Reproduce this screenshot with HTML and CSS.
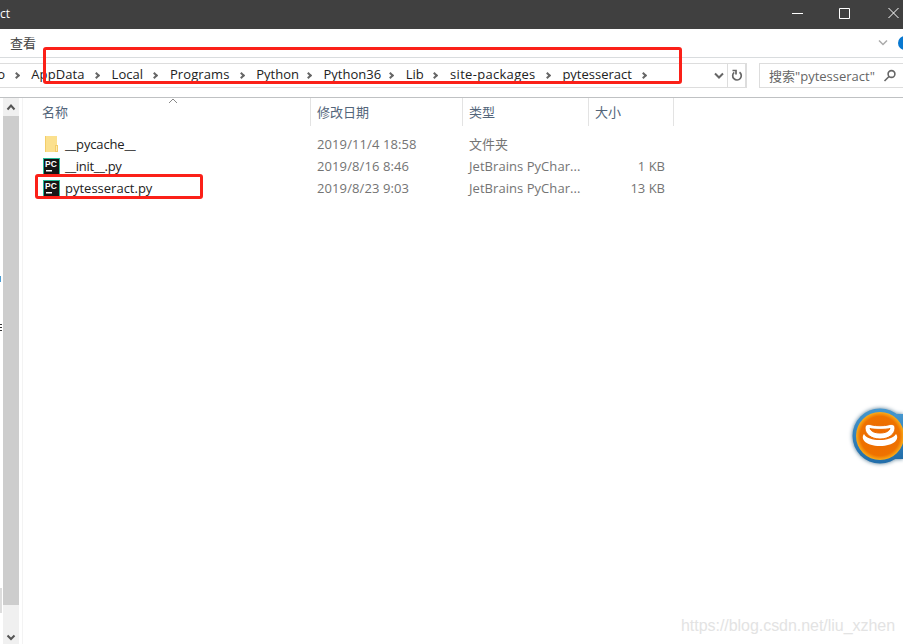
FILE: index.html
```html
<!DOCTYPE html>
<html lang="zh-CN">
<head>
<meta charset="UTF-8">
<title>pytesseract</title>
<link rel="stylesheet" href="styles.css">
</head>
<body>
<div class="window">
<header class="titlebar">
<span class="title">ct</span>
<svg class="controls" width="112" height="29" viewBox="0 0 112 29">
<path d="M1 13.500h11M48.500 8.500h10v10h-10zM97.500 8l10 10M107.500 8l-10 10"/>
</svg>
</header>

<nav class="tabs">
<span class="tab">查看</span>
<svg class="expand" width="10" height="8" viewBox="0 0 10 8"><path d="M1 1.500l4 4 4-4"/></svg>
<svg class="help" width="5" height="14" viewBox="0 0 5 14"><circle cx="7" cy="7" r="7"/></svg>
</nav>

<!-- Address bar -->
<div class="toolbar">
<div class="address">
<span class="cut">o</span><i class="sep"></i>
<span class="app">AppData</span><i class="sep"></i>
<span class="local">Local</span><i class="sep"></i>
<span class="programs">Programs</span><i class="sep"></i>
<span class="python">Python</span><i class="sep"></i>
<span class="python36">Python36</span><i class="sep"></i>
<span class="lib">Lib</span><i class="sep"></i>
<span class="site">site-packages</span><i class="sep"></i>
<span class="tess">pytesseract</span><i class="sep"></i>
<svg class="drop" width="10" height="8" viewBox="0 0 10 8"><path d="M1 1.500l4 4 4-4"/></svg>
<div class="refresh">
<svg width="12" height="13" viewBox="0 0 12 13"><path d="M8.500 3.200a4.300 4.300 0 1 1-5.300.2M1.500 1.500h3.500v4"/></svg>
</div>
</div>
<div class="search">
<span>搜索"pytesseract"</span>
<svg width="14" height="14" viewBox="0 0 14 14"><circle cx="8.500" cy="5" r="3.400"/><path d="M6 7.500L1.500 12"/></svg>
</div>
</div>

<main>
<div class="edge"><span class="dot"></span><span class="lines"></span><span class="block"></span></div>
<div class="scrollbar">
<svg width="16" height="18" viewBox="0 0 16 18"><path d="M4.500 11.500L8 7.500l3.500 4"/></svg>
<div class="thumb"></div>
<svg width="16" height="18" viewBox="0 0 16 18"><path d="M4.500 9.500L8 13l3.500-3.500"/></svg>
</div>
<div class="files">
<div class="row head">
<span class="name">名称<svg class="sort" width="10" height="6" viewBox="0 0 10 6"><path d="M1 5l4-4 4 4"/></svg></span>
<span>修改日期</span>
<span>类型</span>
<span>大小</span>
</div>
<div class="row">
<span class="name">
<svg class="icon" width="17" height="18" viewBox="0 0 17 18"><path fill="#fbe08e" d="M2 1h12v16H2z"/><path fill="#f3cd69" d="M2 1h1v16H2zM12 10h3v7h-3z"/><path fill="#ffeab0" d="M13 11h1v5h-1z"/></svg>
<b class="cache">__pycache__</b></span>
<span class="date">2019/11/4 18:58</span>
<span>文件夹</span>
<span class="size"></span>
</div>
<div class="row">
<span class="name">
<svg class="icon" width="17" height="17" viewBox="0 0 17 17"><path fill="#25b997" d="M0 0h17v17H0z"/><path fill="#151515" d="M1 1h15v15H1z"/><text x="2" y="8.500">PC</text><path fill="#fff" d="M3 12h6v1.500H3z"/></svg>
<b class="init">__init__.py</b></span>
<span class="date">2019/8/16 8:46</span>
<span class="type">JetBrains PyChar...</span>
<span class="size">1 KB</span>
</div>
<div class="row">
<span class="name">
<svg class="icon" width="17" height="17" viewBox="0 0 17 17"><path fill="#25b997" d="M0 0h17v17H0z"/><path fill="#151515" d="M1 1h15v15H1z"/><text x="2" y="8.500">PC</text><path fill="#fff" d="M3 12h6v1.500H3z"/></svg>
<b>pytesseract.py</b></span>
<span class="date">2019/8/23 9:03</span>
<span class="type">JetBrains PyChar...</span>
<span class="size">13 KB</span>
</div>
</div>
</main>

<!-- Highlights and floating items -->
<div class="mark mark-path"></div>
<div class="mark mark-file"></div>
<svg class="float" width="63" height="70" viewBox="0 0 63 70">
<defs>
<radialGradient id="orange"><stop offset="0" stop-color="#eb6800"/><stop offset=".82" stop-color="#ee7200"/><stop offset="1" stop-color="#faad19"/></radialGradient>
<linearGradient id="blue" x2="0" y2="1"><stop offset="0" stop-color="#4597cf"/><stop offset="1" stop-color="#216da9"/></linearGradient>
</defs>
<g class="ring" fill="url(#blue)"><circle cx="40" cy="35" r="27.500"/><path d="M54 13h9v45h-9z"/></g>
<circle cx="40" cy="35" r="24" fill="url(#orange)"/>
<path class="shape" d="M24 33c4 8 27 8 32 0 4 5-2 12-16 12s-20-7-16-12z"/>
<path class="cup" fill-rule="evenodd" d="M25 27c0-4 4-4 7-3 4 1 12 1 16 0 3-1 7-1 7 3 0 6-6 11-15 11s-15-5-15-11zM30 27.500c1 3 5 4.500 10 4.500s9-1.500 10-4.500c-4 1.200-16 1.200-20 0z"/>
</svg>
<div class="watermark">https://blog.csdn.net/liu_xzhen</div>
</div>
</body>
</html>
```

FILE: styles.css
```css
body {
margin: 0;
background: #fff;
font-family: "Open Sans", "Noto Sans CJK SC", sans-serif;
font-size: 13px;
color: #222;
}
.window {
position: relative;
width: 903px;
height: 644px;
overflow: hidden;
display: flex;
flex-direction: column;
}
.titlebar {
height: 29px;
background: #404040;
color: #fff;
display: flex;
justify-content: space-between;
}
.title {
line-height: 27px;
font-size: 12px;
}
.controls {
fill: none;
stroke: #fff;
}
.tabs {
height: 28px;
border-bottom: 1px solid #d9dcde;
display: flex;
align-items: center;
}
.tab {
margin-left: 10px;
padding-bottom: 2px;
flex: 1;
color: #444;
}
.expand {
fill: none;
stroke: #aaa;
stroke-width: 1.5;
margin-right: 10px;
}
.help {
fill: #0878d0;
}

/* Address and search */
.toolbar {
height: 40px;
box-sizing: border-box;
border-bottom: 1px solid #bfc1c3;
padding-top: 5px;
display: flex;
align-items: flex-start;
}
.address {
width: 747px;
height: 25px;
box-sizing: border-box;
border: 1px solid #ddd;
border-left: 0;
display: flex;
align-items: center;
white-space: nowrap;
}
.address span {
flex: none;
padding-bottom: 3px;
}
.cut {
width: 5px;
direction: rtl;
}
.app { width: 54px; letter-spacing: 0.1px; }
.local { width: 32px; }
.programs { width: 60px; letter-spacing: 0.1px; }
.python { width: 41px; }
.python36 { width: 56px; }
.lib { width: 18px; }
.site { width: 86px; letter-spacing: 0.3px; }
.tess { width: 70px; }
.sep {
width: 26.3px;
flex: none;
display: flex;
justify-content: center;
}
.sep::after {
content: "";
width: 3px;
height: 3px;
border: solid #666;
border-width: 2px 2px 0 0;
transform: translateX(-2px) rotate(45deg);
}
.drop {
fill: none;
stroke: #666;
stroke-width: 2;
margin-left: auto;
margin-right: 3px;
}
.refresh {
width: 17px;
height: 23px;
border-left: 1px solid #ddd;
border-right: 1px solid #ddd;
display: flex;
align-items: center;
justify-content: center;
fill: none;
stroke: #666;
stroke-width: 1.7;
}
.search {
margin-left: 12px;
width: 144px;
height: 25px;
box-sizing: border-box;
border: 1px solid #ddd;
border-right: 0;
padding-left: 9px;
display: flex;
align-items: center;
color: #666;
white-space: nowrap;
}
.search span {
width: 114px;
padding-bottom: 1px;
}
.search svg {
fill: none;
stroke: #666;
stroke-width: 1.6;
}

/* File list */
main {
flex: 1;
display: flex;
}
.edge {
width: 3px;
display: flex;
flex-direction: column;
}
.dot {
width: 1px;
height: 6px;
margin-top: 178px;
background: #4a9bd0;
}
.lines {
width: 2px;
height: 9px;
margin-top: 42px;
background: repeating-linear-gradient(#333 0 1px, #fff 1px 3px);
}
.block {
width: 2px;
height: 25px;
margin-top: 255px;
background: #ddd;
}
.scrollbar {
width: 16px;
margin-right: 3px;
background: #f0f0f0;
display: flex;
flex-direction: column;
fill: none;
stroke: #555;
stroke-width: 2;
}
.thumb {
height: 489px;
background: #cdcdcd;
margin-bottom: 21px;
}
.files {
flex: 1;
border-left: 1px solid #f3f3f3;
}
.row {
display: grid;
grid-template-columns: 288px 152px 126px 85px;
height: 22px;
line-height: 22px;
color: #747474;
}
.row > span {
padding-left: 6px;
white-space: nowrap;
}
.head {
height: 28px;
line-height: 28px;
margin-bottom: 7px;
color: #53657a;
}
.head > span {
border-right: 1px solid #e3e3e3;
}
.row .name {
position: relative;
display: flex;
align-items: center;
padding-left: 20px;
color: #222;
}
.row.head .name {
padding-left: 19px;
color: #53657a;
}
.name b {
font-weight: normal;
margin-left: 5px;
}
.name .cache {
letter-spacing: -0.15px;
}
.name .init {
letter-spacing: -0.3px;
}
.row .date {
letter-spacing: 0.1px;
}
.row .type {
letter-spacing: 0.05px;
}
.row .size {
text-align: right;
padding-right: 9px;
}
.icon text {
font: bold 8.5px "Liberation Sans", sans-serif;
fill: #fff;
}
.sort {
position: absolute;
left: 145px;
top: 0;
fill: none;
stroke: #888;
}

.mark {
position: absolute;
box-sizing: border-box;
border: 3px solid #fb2018;
border-radius: 3px;
}
.mark-path {
left: 43px;
top: 47px;
width: 639px;
height: 37px;
}
.mark-file {
left: 35px;
top: 174px;
width: 168px;
height: 25px;
}
.float {
position: absolute;
right: 0;
top: 401px;
}
.ring {
filter: drop-shadow(0 0 2px #4c7590);
}
.shape {
fill: #fff;
}
.cup {
fill: #fff;
stroke: #ed6b00;
stroke-width: 1;
}
.watermark {
position: absolute;
right: 8px;
bottom: 8px;
font: 16px/20px "Liberation Sans", sans-serif;
letter-spacing: -0.04px;
color: #e3e3e3;
}
```
